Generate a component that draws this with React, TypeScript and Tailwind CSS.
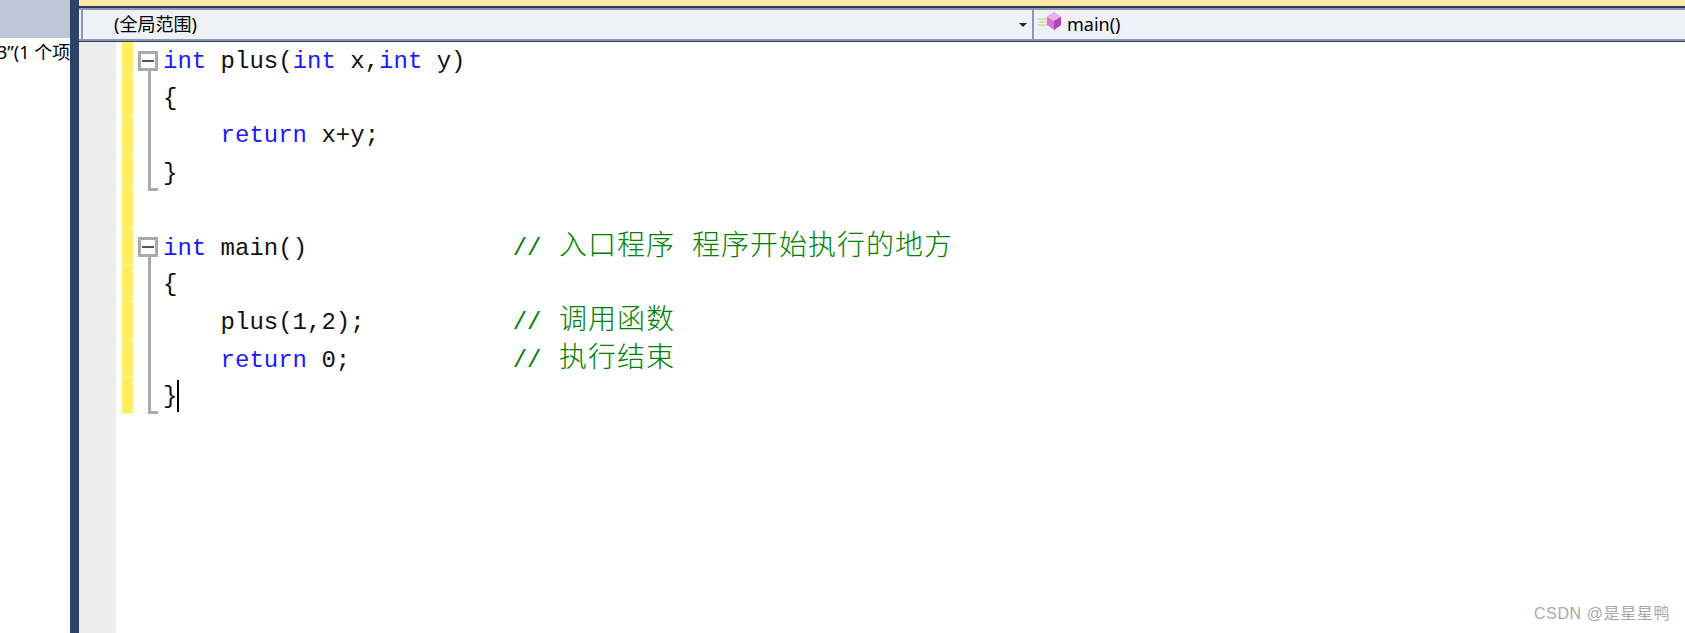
import React from 'react';

const MONO = 'font-["Liberation_Mono","Noto_Sans_CJK_SC",monospace]';

const Cjk: React.FC<{ children: React.ReactNode }> = ({ children }) => (
  <span className='ml-[3px] font-["Noto_Sans_CJK_SC",sans-serif] text-[28px] font-light tracking-[1px] [word-spacing:10px] leading-none text-[#008000]'>{children}</span>
);

const MethodIcon: React.FC = () => (
  <svg width="25" height="18" viewBox="0 0 25 18" className="shrink-0 -mt-[7px]">
    <path d="M0 7h9M1 10h8M0 13h9" stroke="#d8d69a" strokeWidth="1.4" />
    <path d="M9 5l7-5 7 5v8l-7 5-7-5z" fill="#d873d8" />
    <path d="M9 5l7 4 7-4-7-5z" fill="#efaeec" />
    <path d="M16 9v9l7-5V5z" fill="#a84aa8" />
  </svg>
);

// fold column: box on function head, line through the body, hook at the end
const Fold: React.FC<{ type?: 'box' | 'line' | 'end' | 'none' }> = ({ type = 'none' }) => {
  if (type === 'box') {
    return (
      <div className="relative w-[30px] h-full shrink-0">
        <div className="absolute left-[5px] top-[9px] w-[20px] h-[20px] border-[3px] border-[#aaaaaa] flex items-center justify-center bg-white">
          <div className="w-[12px] h-[2px] bg-[#555]" />
        </div>
        <div className="absolute left-[15px] top-[29px] bottom-0 w-[3px] bg-[#aaaaaa]" />
      </div>
    );
  }
  if (type === 'line') {
    return (
      <div className="w-[30px] h-full shrink-0 pl-[15px]">
        <div className="w-[3px] h-full bg-[#aaaaaa]" />
      </div>
    );
  }
  if (type === 'end') {
    return (
      <div className="w-[30px] h-full shrink-0 pl-[15px]">
        <div className="w-[10px] h-full border-l-[3px] border-b-[3px] border-[#aaaaaa]" />
      </div>
    );
  }
  return <div className="w-[30px] h-full shrink-0" />;
};

const CodeLine: React.FC<{ fold?: 'box' | 'line' | 'end' | 'none'; children?: React.ReactNode }> = ({ fold, children }) => (
  <div className="flex h-[37.2px]">
    <div className="w-[37px] bg-[#eeeeee] shrink-0" />
    <div className="w-[6px] shrink-0" />
    <div className="w-[11px] bg-[#ffee62] border-b border-[#fff6a8] shrink-0" />
    <Fold type={fold} />
    <pre className={`${MONO} text-[24px] leading-[37.2px] text-[#111] pt-[1px] whitespace-pre`}>{children}</pre>
  </div>
);

const Kw: React.FC<{ children: React.ReactNode }> = ({ children }) => <span className="text-[#1a1aff]">{children}</span>;
const Comment: React.FC<{ text: string }> = ({ text }) => (
  <span className="ml-[4px] text-[#008000]">
    {'// '}
    <Cjk>{text}</Cjk>
  </span>
);

export default function App() {
  return (
    <div className="flex w-[1685px] h-[633px] overflow-hidden bg-white font-['Liberation_Sans','Noto_Sans_CJK_SC',sans-serif]">
      {/* solution explorer sliver */}
      <div className="w-[70px] shrink-0 overflow-hidden">
        <div className="h-[38px] bg-[#bcc7d8]" />
        <div className="font-['Noto_Sans','Noto_Sans_CJK_SC',sans-serif] text-[18px] leading-[24px] pt-[2px] whitespace-nowrap -ml-[3px] text-black">3”(1 个项</div>
      </div>
      <div className="w-[9px] shrink-0 bg-[#2d4269]" />

      <div className="flex-1 flex flex-col min-w-0">
        <div className="h-[6px] bg-[#ffe8a6]" />
        <div className="h-[2px] bg-[#2d3c5c]" />
        {/* scope / member dropdowns */}
        <div className="h-[33px] flex pl-[2px] bg-[#f0f1f8] border-t-[2px] border-b-[2px] border-[#8e97ab] font-['Noto_Sans','Noto_Sans_CJK_SC',sans-serif] text-black">
          <div className="w-[953px] flex items-center justify-between border-l-[2px] border-r-[2px] border-[#8e97ab] pl-[31px] pr-[5px]">
            <span className="text-[18px]">(全局范围)</span>
            <span className="w-0 h-0 border-x-[4px] border-x-transparent border-t-[4px] border-t-[#222]" />
          </div>
          <div className="flex-1 flex items-center gap-[4px] pl-[4px]">
            <MethodIcon />
            <span className="text-[18px]">main()</span>
          </div>
        </div>
        <div className="h-[1px] bg-[#2d3c5c]" />

        <div className="relative flex-1 flex flex-col">
          <CodeLine fold="box"><Kw>int</Kw> plus(<Kw>int</Kw> x,<Kw>int</Kw> y)</CodeLine>
          <CodeLine fold="line">{'{'}</CodeLine>
          <CodeLine fold="line">{'    '}<Kw>return</Kw> x+y;</CodeLine>
          <CodeLine fold="end">{'}'}</CodeLine>
          <CodeLine />
          <CodeLine fold="box"><Kw>int</Kw> main(){'              '}<Comment text="入口程序 程序开始执行的地方" /></CodeLine>
          <CodeLine fold="line">{'{'}</CodeLine>
          <CodeLine fold="line">{'    '}plus(1,2);{'          '}<Comment text="调用函数" /></CodeLine>
          <CodeLine fold="line">{'    '}<Kw>return</Kw> 0;{'           '}<Comment text="执行结束" /></CodeLine>
          <CodeLine fold="end">{'}'}<span className="inline-block w-[2px] h-[32px] bg-black align-middle" /></CodeLine>
          <div className="w-[37px] flex-1 bg-[#eeeeee]" />
          <div className="absolute right-[15px] bottom-[8px] text-[16px] leading-[22px] text-[#a8a8a8] tracking-[0.6px]">CSDN @是星星鸭</div>
        </div>
      </div>
    </div>
  );
}
